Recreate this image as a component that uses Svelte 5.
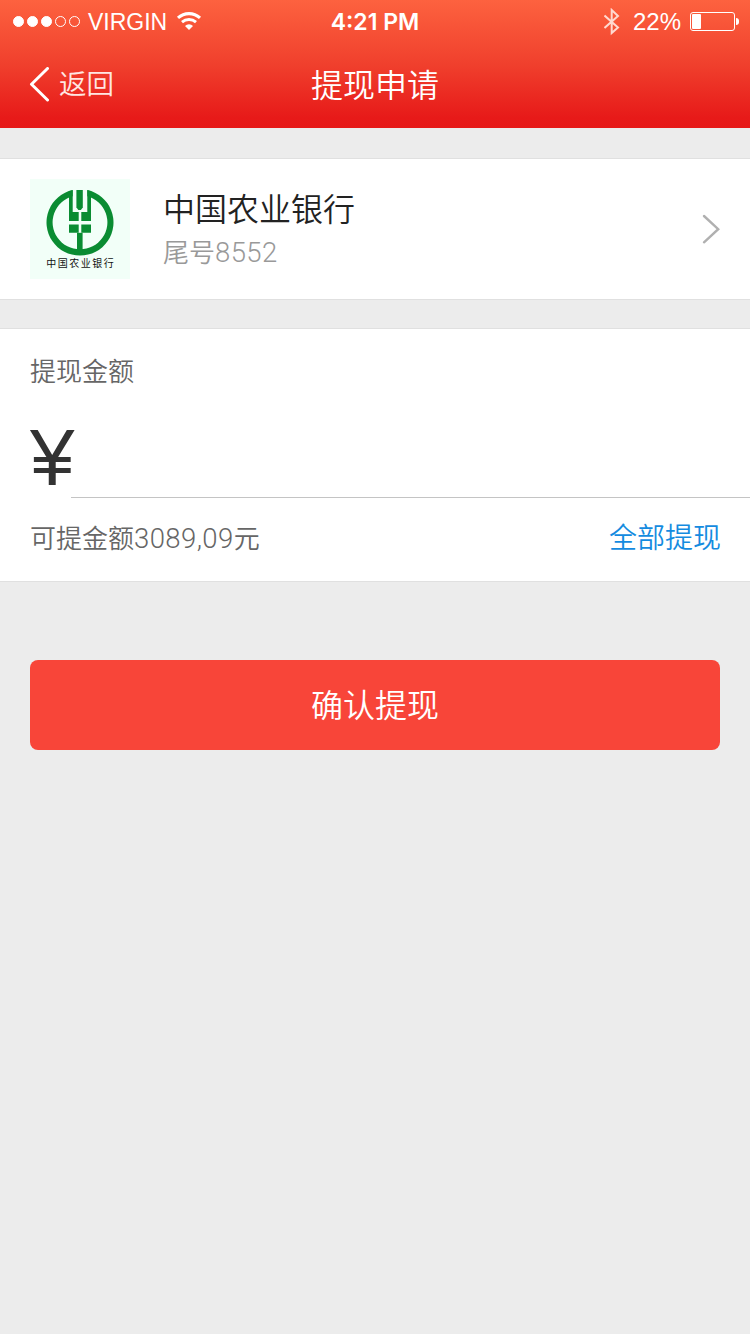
<script lang="ts">
  const title = '提现申请';
  const signal = [true, true, true, false, false];
  const battery = 22;

  const bank = { name: '中国农业银行', tail: '8552' };
  const available = '3089,09';

  let amount = $state('');

  function withdrawAll() {
    amount = available;
  }
</script>

<div class="page">
  <header class="header">
    <div class="status">
      <div class="status-left">
        <span class="signal">
          {#each signal as on}
            <i class="dot" class:on></i>
          {/each}
        </span>
        <span class="carrier">VIRGIN</span>
        <svg class="wifi" width="26" height="20" viewBox="0 0 26 20">
          <path d="M2 6.9A16.3 16.3 0 0 1 24 6.9" fill="none" stroke="#fff" stroke-width="3.1" />
          <path d="M6 11.1A10.5 10.5 0 0 1 20 11.1" fill="none" stroke="#fff" stroke-width="2.9" />
          <path d="M9 15A5.6 5.6 0 0 1 17 15L13 19Z" fill="#fff" />
        </svg>
      </div>
      <span class="time">4:21 PM</span>
      <div class="status-right">
        <svg class="bluetooth" width="16" height="28" viewBox="0 0 16 28">
          <path d="M.5 7.5L14 19.5L7.7 25V2L14 8L.5 20" fill="none" stroke="#ffd9d0" stroke-width="2" />
        </svg>
        <span class="percent">{battery}%</span>
        <span class="battery"><i class="level" style="width: {battery}%"></i></span>
        <i class="battery-cap"></i>
      </div>
    </div>
    <nav class="nav">
      <button class="back">
        <svg width="20" height="36" viewBox="0 0 20 36">
          <path d="M18.5 1.5L2.5 17.2L18.5 33" fill="none" stroke="#fff" stroke-width="3" stroke-linecap="round" stroke-linejoin="round" />
        </svg>
        <span>返回</span>
      </button>
      <h1 class="title">{title}</h1>
    </nav>
  </header>

  <section class="card bank">
    <svg class="logo" width="100" height="100" viewBox="0 0 100 100">
      <rect width="100" height="100" fill="#f2fff8" />
      <g fill="#0a8c32">
        <path d="M42.7 11A33.5 33.2 0 1 0 57.3 11V17.3A27.4 27 0 1 1 42.7 17.3Z" />
        <path d="M46.4 11h6.4v17.5l-2 2.5h-2.4l-2-2.5z" />
        <path d="M39 12.2l3.7-1.2V33h6v9H39z" />
        <path d="M61 12.2l-3.7-1.2V33h-6v9H61z" />
        <path d="M39 45.4h9.7v8.4H39zM51.3 45.4H61v8.4h-9.7z" />
        <path d="M47 53.8h5.6V73H47z" />
      </g>
      <text x="50.8" y="88" text-anchor="middle">{bank.name}</text>
    </svg>
    <div class="bank-info">
      <span class="bank-name">{bank.name}</span>
      <span class="bank-tail">尾号<span class="num">{bank.tail}</span></span>
    </div>
    <svg class="chevron" width="20" height="32" viewBox="0 0 20 32">
      <path d="M4 3L18.2 16.2L4 29.3" fill="none" stroke="#b0b0b0" stroke-width="2.4" stroke-linecap="round" />
    </svg>
  </section>

  <section class="card amount">
    <p class="label">提现金额</p>
    <div class="entry">
      <span class="yen">¥</span>
      <input class="input" type="text" bind:value={amount} />
    </div>
    <div class="available">
      <span>可提金额<span class="num">{available}</span>元</span>
      <button class="all" onclick={withdrawAll}>全部提现</button>
    </div>
  </section>

  <button class="submit">确认提现</button>
</div>

<style>
  :global(body) { margin: 0; background: #ececec; }

  .page {
    display: flex;
    flex-direction: column;
    min-height: 1334px;
    background: #ececec;
    font-family: "Liberation Sans", "Noto Sans CJK SC", sans-serif;
    font-weight: 350;
  }

  button {
    border: 0;
    padding: 0;
    background: none;
    font: inherit;
    cursor: pointer;
  }

  .header {
    height: 128px;
    color: #fff;
    background: linear-gradient(#fd623f, #f0402d 50%, #e71a19 92%, #e61817);
  }

  .status {
    display: grid;
    grid-template-columns: 1fr auto 1fr;
    align-items: center;
    height: 43px;
    padding: 0 11px 0 13px;
    font-size: 24px;
  }
  .status-left, .status-right { display: flex; align-items: center; }
  .status-right { justify-content: flex-end; }

  .signal { display: flex; gap: 3px; }
  .dot {
    box-sizing: border-box;
    width: 11px;
    height: 11px;
    border: 1px solid #fff;
    border-radius: 50%;
  }
  .dot.on { background: #fff; }
  .carrier { margin-left: 8px; padding-top: 2px; font-size: 23px; line-height: 27px; }
  .wifi { margin: 0 0 2px 9px; }
  .time { margin-right: 2px; font-family: Inter, sans-serif; font-size: 23px; font-weight: 600; }
  .percent { margin: 0 9px 0 13px; padding-top: 1px; }

  .battery {
    box-sizing: border-box;
    width: 45px;
    height: 19px;
    padding: 1px;
    border: 1px solid #fff;
    border-radius: 3px;
  }
  .level { display: block; height: 15px; border-radius: 1px; background: #fff; }
  .battery-cap { width: 3px; height: 7px; margin-left: 1px; border-radius: 0 3px 3px 0; background: #fff; }

  .nav {
    display: grid;
    grid-template-columns: 1fr auto 1fr;
    align-items: center;
    height: 83px;
    padding: 0 29px;
  }
  .back {
    display: flex;
    align-items: center;
    gap: 10px;
    color: #ffe6e2;
    font-size: 27.5px;
  }
  .back span { padding-bottom: 5px; }
  .title { margin: 0; padding-bottom: 3px; font-size: 32px; font-weight: 350; }

  .card {
    background: #fff;
    border-top: 1px solid #e0e0e0;
    border-bottom: 1px solid #e0e0e0;
  }

  .bank {
    display: flex;
    align-items: center;
    height: 140px;
    margin-top: 30px;
    padding: 0 30px;
  }
  .logo text {
    font-family: "Noto Sans CJK SC", sans-serif;
    font-size: 10px;
    font-weight: 400;
    letter-spacing: 1.5px;
    fill: #111;
  }
  .bank-info {
    display: flex;
    flex: 1;
    flex-direction: column;
    margin-left: 33px;
    padding-top: 3px;
  }
  .bank-name { color: #222; font-size: 32px; line-height: 44px; }
  .bank-tail { color: #999; font-size: 26px; line-height: 42px; }
  .num { font-family: Roboto, sans-serif; font-size: 27.5px; font-weight: 300; letter-spacing: 0.4px; }

  .amount { margin-top: 28px; }
  .label {
    margin: 0;
    padding: 25px 30px 0;
    color: #666;
    font-size: 26px;
    line-height: 37px;
  }
  .entry { display: flex; height: 107px; padding-left: 30px; }
  .yen { width: 41px; color: #333; font-size: 80px; line-height: 133px; }
  .input {
    flex: 1;
    min-width: 0;
    margin: 0;
    padding: 0 30px 0 20px;
    border: 0;
    border-bottom: 1px solid #c4c4c4;
    outline: none;
    background: none;
    color: #333;
    font: 300 60px "Liberation Sans", sans-serif;
  }
  .available {
    display: flex;
    align-items: center;
    justify-content: space-between;
    box-sizing: border-box;
    height: 83px;
    padding: 0 29px 7px 30px;
    color: #666;
    font-size: 26px;
  }
  .all { padding-bottom: 1px; color: #148be0; font-size: 28px; }

  .submit {
    height: 90px;
    margin: 78px 30px 0;
    padding-bottom: 4px;
    border-radius: 8px;
    background: #f84539;
    color: #fff;
    font-size: 32px;
  }
</style>
